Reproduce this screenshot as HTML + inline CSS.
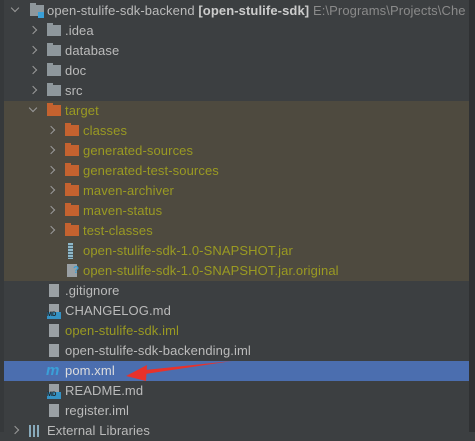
<!DOCTYPE html>
<html><head><style>
body{margin:0;width:475px;height:432px;background:#3c3f41;overflow:hidden;position:relative;font-family:"Liberation Sans","DejaVu Sans",sans-serif;font-size:13px;color:#bbbbbb;letter-spacing:0.1px}
.r{position:absolute;left:0;width:469px;overflow:hidden;height:20px;line-height:20px;white-space:nowrap}
.t{position:absolute;top:0}
.o{color:#9a9a22}
.ar{position:absolute;top:6px;width:5px;height:5px;border-right:1.5px solid #9a9a9a;border-bottom:1.5px solid #9a9a9a}
.rt{transform:rotate(-45deg)}
.dn{transform:rotate(45deg);top:4px}
.f{position:absolute;top:4px;width:14px;height:11px;background:#8e979c}
.f::before{content:"";position:absolute;left:0;top:-2px;width:6px;height:3px;background:inherit}
.fo{background:#c4622f}
.file{position:absolute;top:3px;width:10px;height:13px;background:#9aa0a4}
</style></head><body>
<div style="position:absolute;left:0;top:0;width:4px;height:432px;background:#36393b"></div>
<div style="position:absolute;left:469px;top:0;width:6px;height:432px;background:#2f3133"></div>
<div style="position:absolute;left:4px;top:101px;width:465px;height:180px;background:#4e4a3f"></div>
<div style="position:absolute;left:4px;top:361px;width:465px;height:20px;background:#4b6eaf"></div>

<div class="r" style="top:1px"><div class="ar dn" style="left:12px"></div><div class="f" style="left:30px"></div><div style="position:absolute;left:38px;top:11px;width:6px;height:6px;background:#3aa0d8"></div><span class="t" style="left:47px">open-stulife-sdk-backend <b style="color:#ccc">[open-stulife-sdk]</b> <span style="color:#8a8a8a">E:\Programs\Projects\Che</span></span></div>
<div class="r" style="top:21px"><div class="ar rt" style="left:30px"></div><div class="f" style="left:47px"></div><span class="t" style="left:65px">.idea</span></div>
<div class="r" style="top:41px"><div class="ar rt" style="left:30px"></div><div class="f" style="left:47px"></div><span class="t" style="left:65px">database</span></div>
<div class="r" style="top:61px"><div class="ar rt" style="left:30px"></div><div class="f" style="left:47px"></div><span class="t" style="left:65px">doc</span></div>
<div class="r" style="top:81px"><div class="ar rt" style="left:30px"></div><div class="f" style="left:47px"></div><span class="t" style="left:65px">src</span></div>
<div class="r" style="top:101px"><div class="ar dn" style="left:30px"></div><div class="f fo" style="left:47px"></div><span class="t o" style="left:65px">target</span></div>
<div class="r" style="top:121px"><div class="ar rt" style="left:48px"></div><div class="f fo" style="left:65px"></div><span class="t o" style="left:83px">classes</span></div>
<div class="r" style="top:141px"><div class="ar rt" style="left:48px"></div><div class="f fo" style="left:65px"></div><span class="t o" style="left:83px">generated-sources</span></div>
<div class="r" style="top:161px"><div class="ar rt" style="left:48px"></div><div class="f fo" style="left:65px"></div><span class="t o" style="left:83px">generated-test-sources</span></div>
<div class="r" style="top:181px"><div class="ar rt" style="left:48px"></div><div class="f fo" style="left:65px"></div><span class="t o" style="left:83px">maven-archiver</span></div>
<div class="r" style="top:201px"><div class="ar rt" style="left:48px"></div><div class="f fo" style="left:65px"></div><span class="t o" style="left:83px">maven-status</span></div>
<div class="r" style="top:221px"><div class="ar rt" style="left:48px"></div><div class="f fo" style="left:65px"></div><span class="t o" style="left:83px">test-classes</span></div>
<div class="r" style="top:241px"><div style="position:absolute;left:68px;top:2px;width:5px;height:16px;background:repeating-linear-gradient(#8fb8c8 0 2px,#4a6470 2px 3px)"></div><span class="t o" style="left:83px">open-stulife-sdk-1.0-SNAPSHOT.jar</span></div>
<div class="r" style="top:261px"><div class="file" style="left:67px"></div><span style="position:absolute;left:73px;top:3px;line-height:14px;color:#3aa0d8;font-weight:bold;font-size:10px">?</span><span class="t o" style="left:83px">open-stulife-sdk-1.0-SNAPSHOT.jar.original</span></div>
<div class="r" style="top:281px"><div class="file" style="left:49px"></div><span class="t" style="left:65px">.gitignore</span></div>
<div class="r" style="top:301px"><div class="file" style="left:49px"></div><div style="position:absolute;left:47px;top:11px;width:14px;height:7px;background:#3592c4;font-size:6px;line-height:7px;color:#222;font-weight:bold;letter-spacing:0">MD</div><span class="t" style="left:65px">CHANGELOG.md</span></div>
<div class="r" style="top:321px"><div class="file" style="left:49px"></div><span class="t o" style="left:65px">open-stulife-sdk.iml</span></div>
<div class="r" style="top:341px"><div class="file" style="left:49px"></div><span class="t" style="left:65px">open-stulife-sdk-backending.iml</span></div>
<div class="r" style="top:361px"><span style="position:absolute;left:46px;top:0;color:#3aa0d8;font-style:italic;font-weight:bold;font-size:15px">m</span><span class="t" style="left:65px;color:#ddd">pom.xml</span></div>
<div class="r" style="top:381px"><div class="file" style="left:49px"></div><div style="position:absolute;left:47px;top:11px;width:14px;height:7px;background:#3592c4;font-size:6px;line-height:7px;color:#222;font-weight:bold;letter-spacing:0">MD</div><span class="t" style="left:65px">README.md</span></div>
<div class="r" style="top:401px"><div class="file" style="left:49px"></div><span class="t" style="left:65px">register.iml</span></div>
<div class="r" style="top:421px"><div class="ar rt" style="left:12px"></div><div style="position:absolute;left:29px;top:4px;width:12px;height:12px;background:repeating-linear-gradient(90deg,#8ab 0 2px,transparent 2px 4px)"></div><span class="t" style="left:47px">External Libraries</span></div>

<svg style="position:absolute;left:0;top:0" width="475" height="432">
<path d="M232 361 L145 370 L145 374 Z" fill="#e8322b"/>
<path d="M126 376 L147 365 L146 381 Z" fill="#e8322b"/>
</svg>
</body></html>
